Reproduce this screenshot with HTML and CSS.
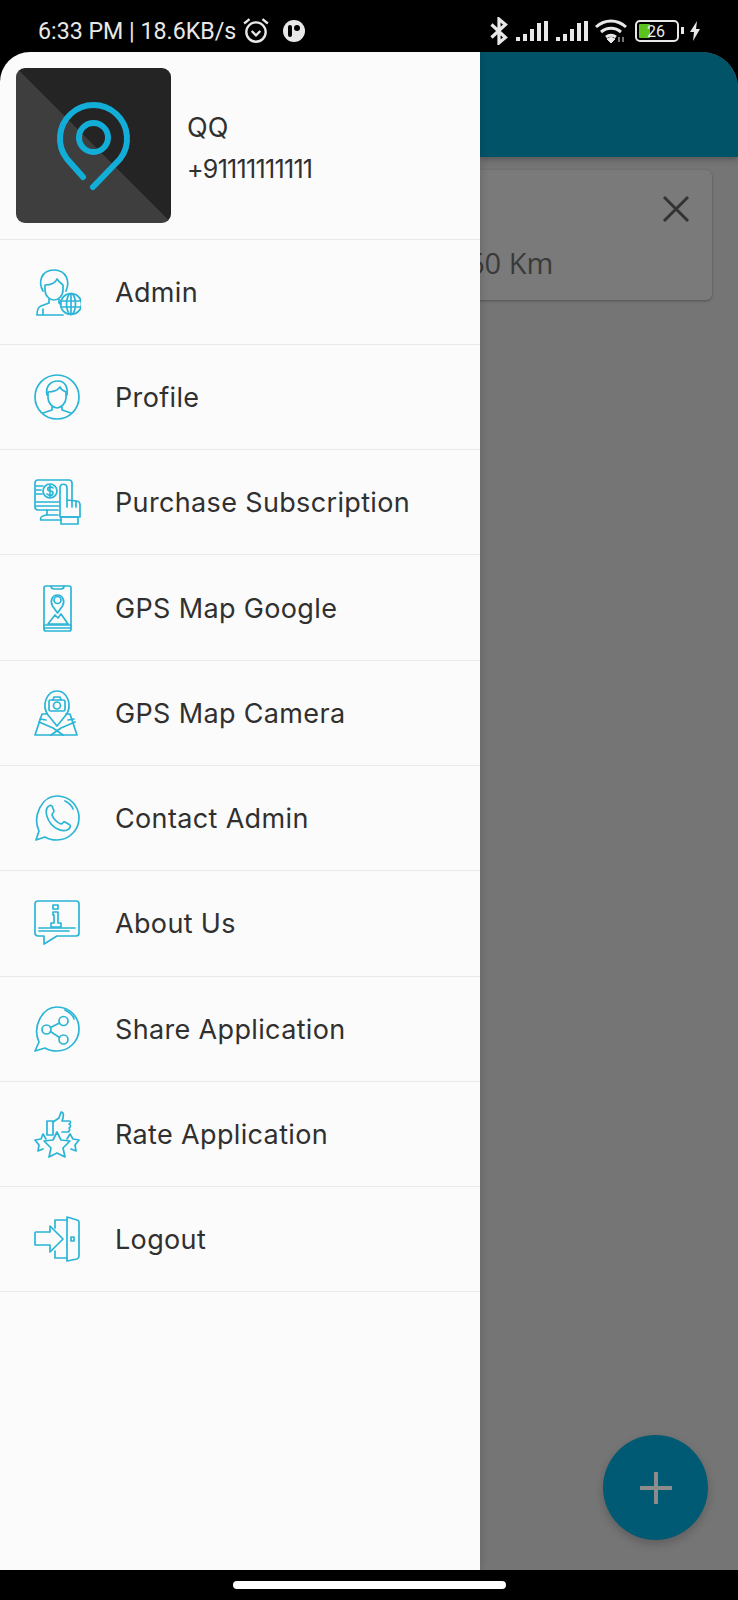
FILE: index.html
```html
<!DOCTYPE html>
<html lang="en">
    <head>
        <meta charset="UTF-8">
        <meta name="viewport" content="width=device-width, initial-scale=1.0">
        <title>GPS Map Menu</title>
        <link rel="stylesheet" href="styles.css">
    </head>
    <body>
        <div class="status-bar">
            <div class="status-left">
                <span class="status-text">6:33 PM | 18.6KB/s</span>
                <svg class="st-icon" width="28" height="28" viewBox="0 0 26 26">
                    <circle cx="13" cy="14" r="9" fill="none" stroke="#e8e8e8" stroke-width="2.2"/>
                    <path d="M2 6l5-4M24 6l-5-4" fill="none" stroke="#e8e8e8" stroke-width="2.2"/>
                    <path d="M9 13l4 4 4-4" fill="none" stroke="#e8e8e8" stroke-width="2.2"/>
                </svg>
                <svg class="st-icon st-gap" width="24" height="24" viewBox="0 0 24 24">
                    <circle cx="12" cy="12" r="11" fill="#e8e8e8"/>
                    <rect x="6" y="6" width="4" height="12" rx="2" fill="#000"/>
                    <circle cx="15" cy="9" r="3" fill="#000"/>
                </svg>
            </div>
            <div class="status-right">
                <svg width="20" height="28" viewBox="0 0 18 26">
                    <path d="M2 7l13 12-6 5V2l6 5L2 19" fill="none" stroke="#e8e8e8" stroke-width="3"/>
                </svg>
                <svg width="34" height="22" viewBox="0 0 34 22">
                    <path d="M1 17h4v4H1zM8 14h4v7H8zM15 9h4v12h-4zM22 3h4v18h-4zM29 1h4v20h-4z" fill="#e8e8e8"/>
                </svg>
                <svg width="34" height="22" viewBox="0 0 34 22">
                    <path d="M1 17h4v4H1zM8 14h4v7H8zM15 9h4v12h-4zM22 3h4v18h-4zM29 1h4v20h-4z" fill="#e8e8e8"/>
                </svg>
                <svg width="32" height="24" viewBox="0 0 32 24">
                    <path d="M1 8c9-8 21-8 30 0M6 13c6-5 14-5 20 0M11 18c3-2 7-2 10 0" fill="none" stroke="#e8e8e8" stroke-width="3"/>
                    <path d="M12 20l4-2 4 2-4 4zM24 23v-5M28 23v-5" fill="#e8e8e8" stroke="#e8e8e8"/>
                </svg>
                <div class="battery">
                    <span class="battery-fill"></span>
                    <span class="battery-num">26</span>
                </div>
                <svg class="bolt" width="12" height="20" viewBox="0 0 12 20">
                    <path d="M8 0L1 11h4l-1 9 7-12H7z" fill="#e8e8e8"/>
                </svg>
            </div>
        </div>

        <div class="screen">
            <aside class="drawer">
                <div class="drawer-head">
                    <div class="avatar">
                        <svg width="155" height="155" viewBox="0 0 155 155">
                            <path d="M67 109L51 91A33.500 33.500 0 1 1 104 91L77 119" fill="none" stroke="#12aed8" stroke-width="6" stroke-linecap="round" stroke-linejoin="round"/>
                            <circle cx="77.500" cy="69.500" r="14.500" fill="none" stroke="#12aed8" stroke-width="6"/>
                        </svg>
                    </div>
                    <div class="user">
                        <span class="user-name">QQ</span>
                        <span class="user-phone">+91111111111</span>
                    </div>
                </div>
                <ul class="menu">
                    <li class="menu-item">
                        <svg class="ic" viewBox="0 0 48 48">
                            <path d="M10 23C5 14 8 2 21 2s16 12 12 21"/>
                            <path d="M12 17c4 0 10-1 12-6 2 3 5 5 6 6v5c0 6-5 10-9 10s-9-4-9-10z"/>
                            <path d="M16 31v4l-8 3c-3 1-4 5-4 9h26M26 31v4l2 1M10 41v6"/>
                            <circle cx="38" cy="36" r="10.500"/>
                            <ellipse cx="38" cy="36" rx="4.500" ry="10.500"/>
                            <path d="M28 33h20M28 39h20M38 25.500v21"/>
                        </svg>
                        <span>Admin</span>
                    </li>
                    <li class="menu-item">
                        <svg class="ic" viewBox="0 0 48 48">
                            <circle cx="24" cy="24" r="22"/>
                            <path d="M14 22c-2-9 4-14 11-14s10 6 9 14"/>
                            <path d="M15 19c4 0 9-1 12-5 1 3 4 4 6 5v6c0 5-5 10-9 10s-9-5-9-10z"/>
                            <path d="M19 34v3l-9 3M29 34v3l9 3"/>
                        </svg>
                        <span>Profile</span>
                    </li>
                    <li class="menu-item">
                        <svg class="ic" viewBox="0 0 48 48">
                            <path d="M25 32H5c-2 0-3-1-3-3V5c0-2 1-3 3-3h31c2 0 3 1 3 3v17"/>
                            <circle cx="17" cy="13" r="7"/>
                            <path d="M20 10c-2-2-6-1-5 2 1 2 5 0 5 3s-4 3-6 1M17 7v12M3 8h7M3 12h5M3 16h6M3 24h23M3 28h23"/>
                            <path d="M14 32v5M8 42c-2-3 3-5 7-5h10M8 42h20"/>
                            <path d="M27 39V10c0-5 7-5 7 0v12l9 1c3 0 4 2 4 4v12z"/>
                            <path d="M34 22v7M39 23v6M43 23v6M28 39h17v7H28z"/>
                        </svg>
                        <span>Purchase Subscription</span>
                    </li>
                    <li class="menu-item">
                        <svg class="ic" viewBox="0 0 48 48">
                            <rect x="11" y="2" width="27" height="45" rx="2"/>
                            <path d="M18 2c0 3 2 3 3 3h7c1 0 3 0 3-3M11 41h27M11 44h27"/>
                            <path d="M24.500 29l-5-7c-3-5 0-11 5-11s8 6 5 11z"/>
                            <circle cx="24.500" cy="16" r="3.500"/>
                            <path d="M15 40l7-9 3 3 3-4 7 10z"/>
                        </svg>
                        <span>GPS Map Google</span>
                    </li>
                    <li class="menu-item">
                        <svg class="ic" viewBox="0 0 48 48">
                            <path d="M24 37l-9-11C8 16 14 2 24 2s16 14 9 24z"/>
                            <rect x="16" y="11" width="16" height="11" rx="1.500"/>
                            <circle cx="24" cy="16.500" r="3.500"/>
                            <path d="M20 11l1-3h6l1 3"/>
                            <path d="M14 25H9L2 46h42l-7-21h-4"/>
                            <path d="M6 33l14 6 10 7M42 33l-14 6-10 7M7 30l6 1M41 30l-6 1"/>
                        </svg>
                        <span>GPS Map Camera</span>
                    </li>
                    <li class="menu-item">
                        <svg class="ic" viewBox="0 0 48 48">
                            <path d="M6 37C-1 22 9 2 24 2c13 0 22 10 22 22S36 46 24 46c-5 0-9-1-12-3l-9 3z"/>
                            <path d="M14 14c2-3 4-3 5-2l2 5c0 2-2 2-2 4 1 3 5 8 9 9 2 0 2-3 4-2l5 3c1 1 0 4-3 5-4 2-12-1-16-6-4-5-6-12-4-16z"/>
                            <path d="M32 7c4 2 7 5 8 8"/>
                        </svg>
                        <span>Contact Admin</span>
                    </li>
                    <li class="menu-item">
                        <svg class="ic" viewBox="0 0 48 48">
                            <path d="M5 2h38c2 0 3 1 3 3v29c0 2-1 3-3 3H24l-13 8v-8H5c-2 0-3-1-3-3V5c0-2 1-3 3-3z"/>
                            <rect x="20" y="6" width="5" height="4"/>
                            <path d="M20 13h5v11h3v4H18v-4h3v-8h-1z"/>
                            <path d="M6 29h36M6 32h30"/>
                        </svg>
                        <span>About Us</span>
                    </li>
                    <li class="menu-item">
                        <svg class="ic" viewBox="0 0 48 48">
                            <path d="M6 37C-1 22 9 2 24 2c13 0 22 10 22 22S36 46 24 46c-5 0-9-1-12-3L2 46z"/>
                            <circle cx="13.500" cy="24.500" r="4.500"/>
                            <circle cx="30.500" cy="16" r="4.500"/>
                            <circle cx="30.500" cy="34.500" r="4.500"/>
                            <path d="M17.500 22.500l9-4.500M17.500 26.500l9 6M32 5c4 2 8 5 9 9"/>
                        </svg>
                        <span>Share Application</span>
                    </li>
                    <li class="menu-item">
                        <svg class="ic" viewBox="0 0 48 48">
                            <path d="M14 11h6v14h-6z"/>
                            <path d="M20 12l6-4 2-6c3 0 3 4 1 9h7c2 0 2 3 0 3 2 1 2 3 0 4 1 1 1 3-1 4h-6"/>
                            <path d="M24 22l4 8 9 1-7 7 2 9-8-4-8 4 2-9-7-7 9-1z"/>
                            <path d="M13 29l-3-5-2 5-6 1 4 5-1 6 5-2M34 29l3-5 3 5 6 1-4 5 1 6-5-2"/>
                        </svg>
                        <span>Rate Application</span>
                    </li>
                    <li class="menu-item">
                        <svg class="ic" viewBox="0 0 48 48">
                            <path d="M34 2l10 3c2 1 2 1 2 3v33c0 1 0 2-2 3l-10 2z"/>
                            <path d="M34 5H22v8M22 36v7h12"/>
                            <path d="M3 17h14v-6l13 13-13 13v-7H3c-1 0-1 0-1-1V18c0-1 0-1 1-1z"/>
                            <rect x="38" y="22" width="3" height="4"/>
                        </svg>
                        <span>Logout</span>
                    </li>
                </ul>
            </aside>

            <main class="content">
                <div class="app-bar"></div>
                <div class="card">
                    <svg class="close" width="28" height="28" viewBox="0 0 28 28">
                        <path d="M2 2l24 24M26 2L2 26" fill="none" stroke="#333" stroke-width="3"/>
                    </svg>
                    <span class="distance">60 Km</span>
                </div>
                <div class="fab">
                    <svg width="34" height="34" viewBox="0 0 34 34">
                        <path d="M17 1v32M1 17h32" fill="none" stroke="#8c8c8c" stroke-width="4"/>
                    </svg>
                </div>
            </main>
        </div>

        <div class="nav-bar">
            <span class="home-pill"></span>
        </div>
    </body>
</html>
```

FILE: styles.css
```css
body {
    margin: 0;
    width: 738px;
    height: 1600px;
    background-color: #000;
    display: flex;
    flex-direction: column;
    font-family: Inter, "Liberation Sans", sans-serif;
    overflow: hidden;
}
.status-bar {
    height: 52px;
    padding: 10px 37px 0 38px;
    box-sizing: border-box;
    display: flex;
    justify-content: space-between;
    align-items: center;
    color: #e8e8e8;
}
.status-left {
    display: flex;
    align-items: center;
    gap: 6px;
}
.status-text {
    font-family: Roboto, sans-serif;
    font-size: 23.2px;
}
.st-gap {
    margin-left: 6px;
}
.status-right {
    display: flex;
    align-items: center;
    gap: 6px;
}
.battery {
    position: relative;
    width: 40px;
    height: 18px;
    margin-left: 2px;
    border: 2px solid #e8e8e8;
    border-radius: 5px;
    display: flex;
    align-items: center;
}
.battery::after {
    content: "";
    position: absolute;
    right: -7px;
    top: 5px;
    width: 3px;
    height: 7px;
    background-color: #e8e8e8;
}
.battery-fill {
    width: 11px;
    height: 14px;
    margin-left: 2px;
    background-color: #5cc21e;
    border-radius: 1px;
}
.battery-num {
    position: absolute;
    left: 10px;
    font-family: Roboto, sans-serif;
    font-size: 16px;
    color: #eee;
}
.bolt {
    margin-left: 4px;
}
.screen {
    flex: 1;
    display: flex;
    min-height: 0;
}
.drawer {
    width: 480px;
    flex-shrink: 0;
    background-color: #fbfbfb;
    border-top-left-radius: 30px;
    box-shadow: 1px 0 8px rgba(0, 0, 0, 0.14);
    position: relative;
    z-index: 1;
}
.drawer-head {
    height: 187.5px;
    box-sizing: border-box;
    padding: 16px 16px 0;
    display: flex;
    gap: 16px;
    border-bottom: 1px solid #e9e9e9;
}
.avatar {
    width: 155px;
    height: 155px;
    border-radius: 9px;
    background: linear-gradient(to top right, #3e3e3e 50%, #242424 50%);
    overflow: hidden;
}
.user {
    display: flex;
    flex-direction: column;
    justify-content: center;
    gap: 10px;
    color: #303030;
    padding-bottom: 12px;
}
.user-name {
    font-size: 27px;
}
.user-phone {
    font-size: 25px;
    letter-spacing: -0.7px;
}
.menu {
    list-style: none;
    margin: 0;
    padding: 0;
}
.menu-item {
    height: 105.3px;
    box-sizing: border-box;
    padding-left: 33px;
    display: flex;
    align-items: center;
    gap: 34px;
    border-bottom: 1px solid #e9e9e9;
    font-size: 27px;
    letter-spacing: 0.35px;
    color: #303030;
}
.menu-item span {
    margin-top: 1px;
}
.ic {
    width: 48px;
    height: 48px;
    flex-shrink: 0;
    fill: none;
    stroke: #2ab5d6;
    stroke-width: 1.7;
    stroke-linejoin: round;
    stroke-linecap: round;
}
.content {
    flex: 1;
    position: relative;
    background-color: #757575;
    border-top-right-radius: 36px;
    overflow: hidden;
}
.app-bar {
    height: 105px;
    background-color: #015468;
    box-shadow: 0 2px 6px rgba(0, 0, 0, 0.3);
}
.card {
    height: 130px;
    margin: 13px 26px 0 -10px;
    padding-top: 25px;
    box-sizing: border-box;
    display: flex;
    flex-direction: column;
    background-color: #7a7a7a;
    border-radius: 6px;
    box-shadow: 0 1px 3px rgba(0, 0, 0, 0.3);
}
.close {
    align-self: flex-end;
    margin-right: 22px;
}
.distance {
    margin-top: 20px;
    margin-left: -2px;
    font-family: "Open Sans", sans-serif;
    font-size: 29px;
    color: #3a3a3a;
}
.fab {
    position: absolute;
    right: 30px;
    bottom: 30px;
    width: 105px;
    height: 105px;
    border-radius: 50%;
    background-color: #015a73;
    box-shadow: 0 4px 10px rgba(0, 0, 0, 0.2);
    display: flex;
    align-items: center;
    justify-content: center;
}
.nav-bar {
    height: 30px;
    display: flex;
    justify-content: center;
    align-items: center;
}
.home-pill {
    width: 273px;
    height: 8px;
    background-color: #fff;
    border-radius: 4px;
}
```
